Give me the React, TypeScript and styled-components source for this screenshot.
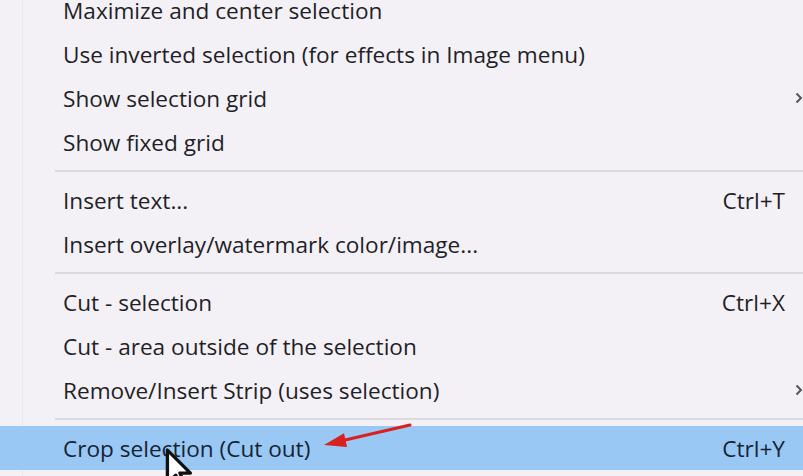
import styled, { createGlobalStyle } from "styled-components";

const GlobalStyle = createGlobalStyle`
  html, body {
    margin: 0;
    padding: 0;
    background: #f4f1f6;
    overflow: hidden;
  }
`;

const Menu = styled.div`
  display: flex;
  flex-direction: column;
  margin-top: -12px;
  width: 803px;
  height: 500px;
  background: linear-gradient(to right, #f4f1f6 0, #f4f1f6 22px, #ebe8ef 22px, #ebe8ef 23px, #f4f1f6 23px);
  font-family: "Open Sans", "Noto Sans", sans-serif;
  font-size: 22.6px;
  color: #1f1f27;
`;

const Item = styled.div<{ $active?: boolean }>`
  position: relative;
  height: 44px;
  display: grid;
  grid-template-columns: 1fr auto 18px;
  align-items: center;
  padding-left: 63px;
  background: ${(p) => (p.$active ? "#99c8f4" : "transparent")};
  color: ${(p) => (p.$active ? "#172333" : "inherit")};
  white-space: nowrap;
`;

const Label = styled.span``;

const Shortcut = styled.span`
  text-align: right;
`;

const SubCell = styled.span`
  display: flex;
  align-items: center;
  padding-left: 10px;
`;

const Separator = styled.div`
  height: 14px;
  display: flex;
  align-items: center;
  padding-left: 55px;

  &::after {
    content: "";
    flex: 1;
    height: 2px;
    background: #dcd9e0;
  }
`;

const Overlay = styled.svg`
  position: absolute;
  overflow: visible;
  pointer-events: none;
`;

const Chevron = () => (
  <svg width="8" height="12" viewBox="0 0 8 12">
    <path d="M1.5 1.5 L6 6 L1.5 10.5" fill="none" stroke="#55545c" strokeWidth="2" />
  </svg>
);

type Entry =
  | { kind: "sep" }
  | { kind: "item"; label: string; shortcut?: string; sub?: boolean; active?: boolean };

const entries: Entry[] = [
  { kind: "item", label: "Maximize and center selection" },
  { kind: "item", label: "Use inverted selection (for effects in Image menu)" },
  { kind: "item", label: "Show selection grid", sub: true },
  { kind: "item", label: "Show fixed grid" },
  { kind: "sep" },
  { kind: "item", label: "Insert text...", shortcut: "Ctrl+T" },
  { kind: "item", label: "Insert overlay/watermark color/image..." },
  { kind: "sep" },
  { kind: "item", label: "Cut - selection", shortcut: "Ctrl+X" },
  { kind: "item", label: "Cut - area outside of the selection" },
  { kind: "item", label: "Remove/Insert Strip (uses selection)", sub: true },
  { kind: "sep" },
  { kind: "item", label: "Crop selection (Cut out)", shortcut: "Ctrl+Y", active: true },
];

export default function App() {
  return (
    <>
      <GlobalStyle />
      <Menu>
        {entries.map((e, i) =>
          e.kind === "sep" ? (
            <Separator key={i} />
          ) : (
            <Item key={i} $active={e.active}>
              <Label>{e.label}</Label>
              <Shortcut>{e.shortcut}</Shortcut>
              <SubCell>{e.sub && <Chevron />}</SubCell>
              {e.active && (
                <>
                  <Overlay width="96" height="30" viewBox="0 0 96 30" style={{ left: 320, top: -4 }}>
                    <line x1="90" y1="3" x2="24" y2="18.3" stroke="#d8201f" strokeWidth="3" strokeLinecap="round" />
                    <polygon points="4,23 27,25 24,11.3" fill="#d8201f" />
                  </Overlay>
                  <Overlay width="32" height="46" viewBox="0 0 15 22" style={{ left: 165, top: 22 }}>
                    <polygon
                      points="1,1 1,17 5,13 8,20 10,19 7,12 12,12"
                      fill="#ffffff"
                      stroke="#111"
                      strokeWidth="1.6"
                      strokeLinejoin="round"
                    />
                  </Overlay>
                </>
              )}
            </Item>
          )
        )}
      </Menu>
    </>
  );
}
